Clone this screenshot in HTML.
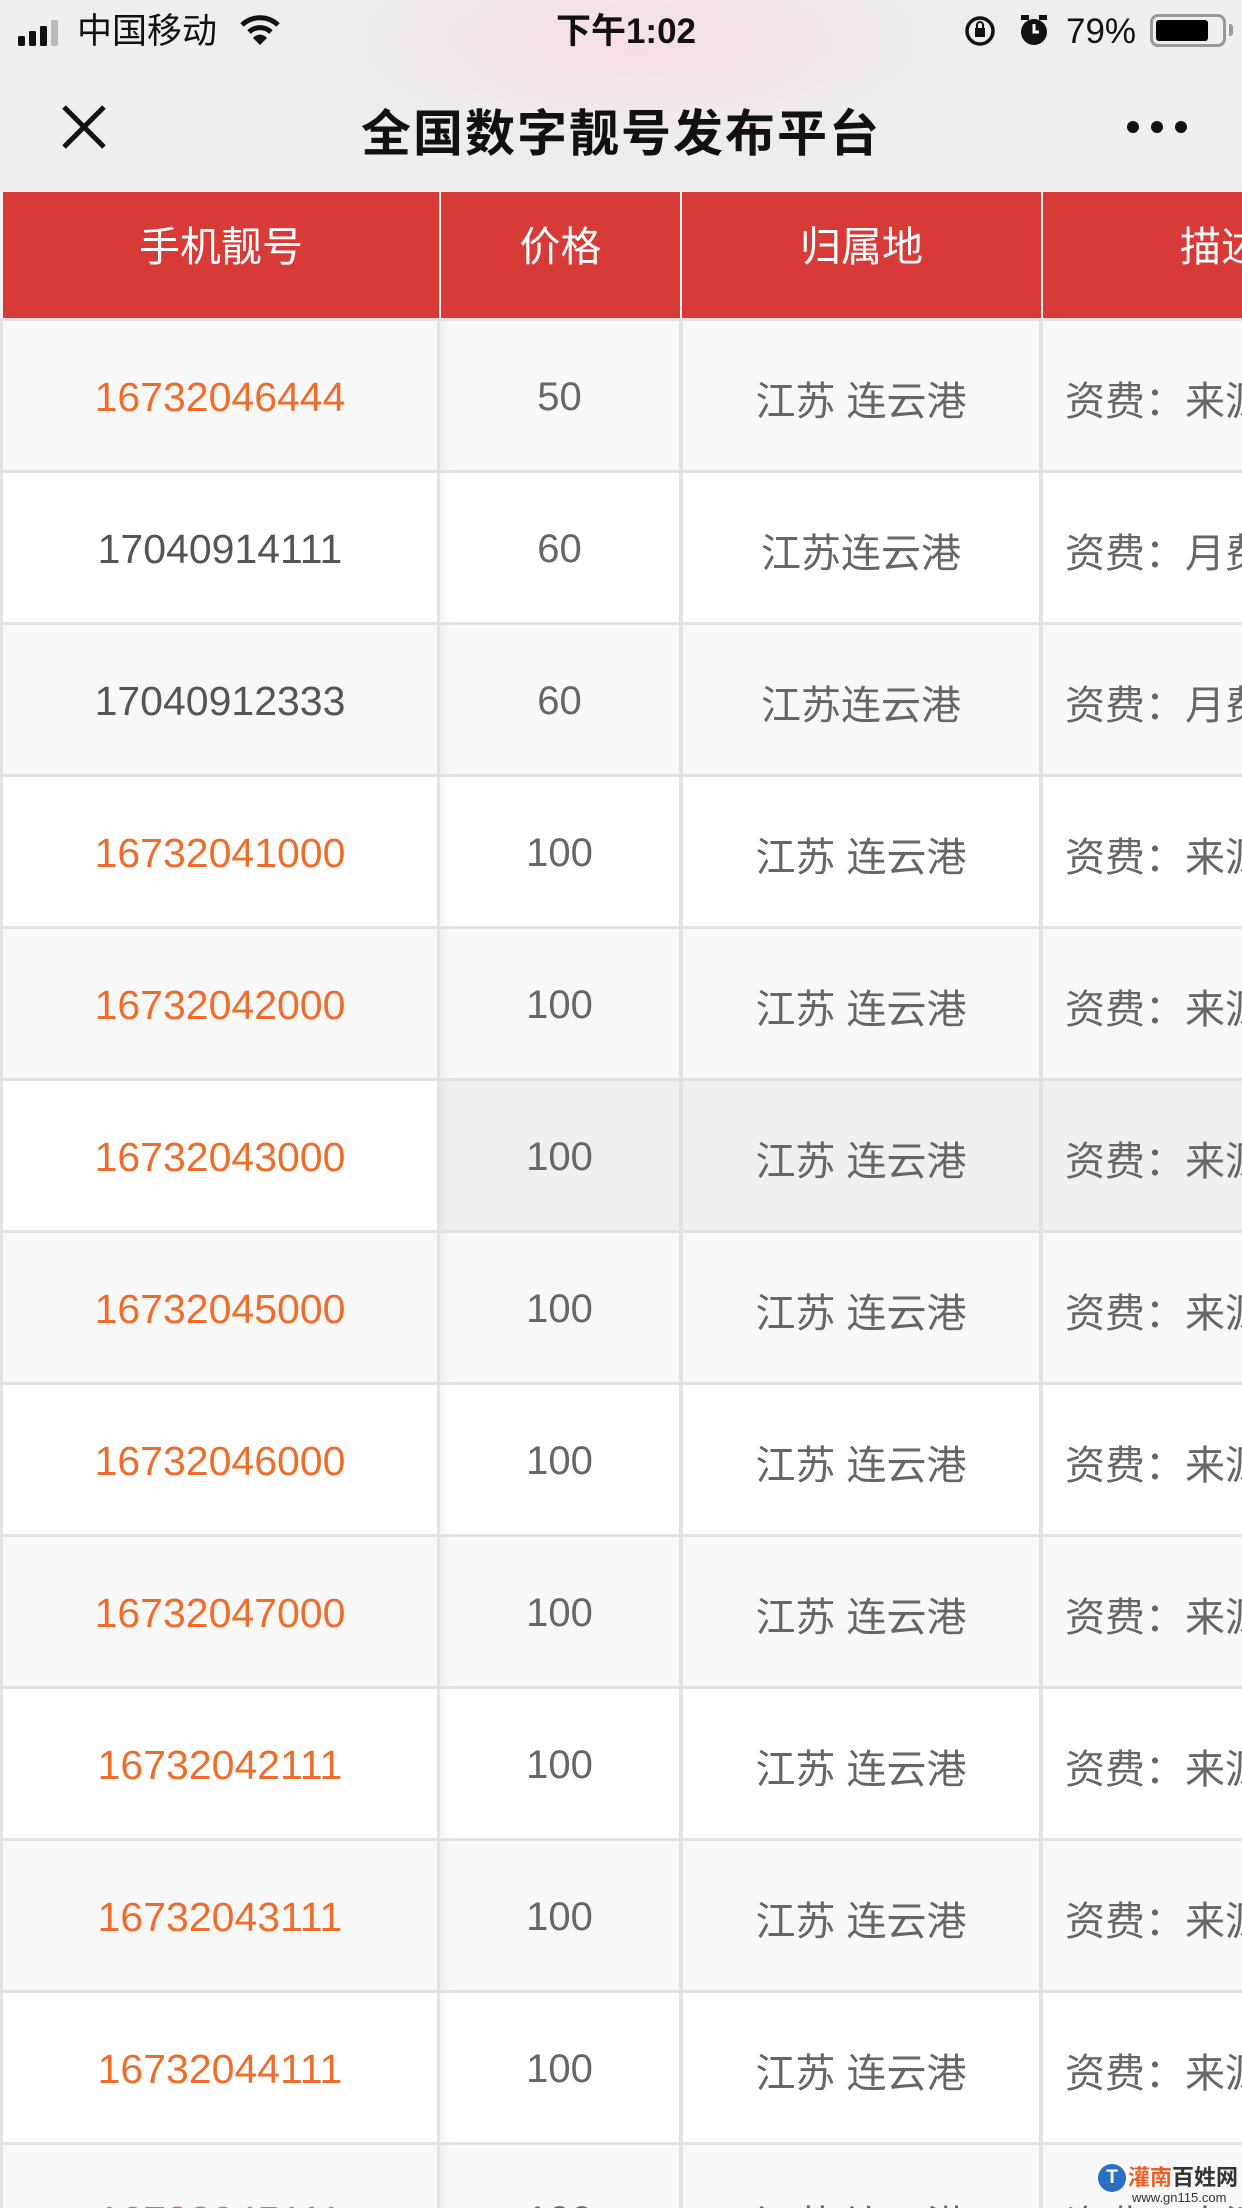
<!DOCTYPE html>
<html><head><meta charset="utf-8">
<style>
*{margin:0;padding:0;box-sizing:border-box}
html,body{width:1242px;height:2208px;overflow:hidden;font-family:"Liberation Sans","Noto Sans CJK SC",sans-serif}
body{background:#e2e2e2;position:relative}
#top{position:absolute;left:0;top:0;width:1242px;height:192px;background:radial-gradient(ellipse 500px 180px at 640px 40px,#f6dfe0 0%,#f1eaea 50%,#efefef 100%)}
.sb{position:absolute;top:8px;font-size:35px;color:#111;line-height:48px}
#title{position:absolute;left:0;right:0;top:94px;text-align:center;font-size:50px;font-weight:bold;color:#111;letter-spacing:2px}
.hdr{position:absolute;top:192px;height:126px;background:#d83a37;color:#fff;font-size:41px;display:flex;align-items:center;justify-content:center;overflow:hidden;white-space:nowrap;padding-bottom:24px}
.row{position:absolute;left:0;width:1242px;height:149px}
.c{position:absolute;top:0;height:149px;display:flex;align-items:center;justify-content:center;font-size:40px;color:#666;overflow:hidden;white-space:nowrap;padding-top:4px}
.c1{left:3px;width:434px;font-size:41px}
.c2{left:440px;width:239px;box-shadow:inset 8px 0 10px -6px rgba(0,0,0,.06)}
.c3{left:683px;width:356px}
.c4{left:1043px;width:199px;justify-content:flex-start;padding-left:22px}
.o{color:#ef6d2a}
.g{color:#555}
.a .c{background:#f8f8f8}
.b .c{background:#fff}
</style></head><body>
<div id="top">
  <svg style="position:absolute;left:18px;top:20px" width="50" height="26"><rect x="0" y="16" width="7" height="10" rx="1.5" fill="#111"/><rect x="11" y="11" width="7" height="15" rx="1.5" fill="#111"/><rect x="22" y="6" width="7" height="20" rx="1.5" fill="#111"/><rect x="33" y="0" width="7" height="26" rx="1.5" fill="#bbb"/></svg>
  <div class="sb" style="left:77px">中国移动</div>
  <svg style="position:absolute;left:240px;top:14px" width="40" height="32" viewBox="0 0 40 32"><path d="M2 11 A26 26 0 0 1 38 11" stroke="#111" stroke-width="5" fill="none"/><path d="M9 18 A16 16 0 0 1 31 18" stroke="#111" stroke-width="5" fill="none"/><path d="M20 31 L13 24 A9 9 0 0 1 27 24 Z" fill="#111"/></svg>
  <div class="sb" style="left:0;right:0;text-align:center;font-weight:bold;padding-left:10px">下午1:02</div>
  <svg style="position:absolute;left:963px;top:14px" width="36" height="34"><circle cx="17" cy="17" r="13" stroke="#111" stroke-width="3.5" fill="none"/><rect x="12" y="14" width="10" height="9" fill="#111"/><path d="M14 14 v-3 a3 3 0 0 1 6 0 v3" stroke="#111" stroke-width="2" fill="none"/></svg>
  <svg style="position:absolute;left:1017px;top:12px" width="34" height="36"><circle cx="17" cy="20" r="13" fill="#111"/><path d="M17 12v8h5" stroke="#fff" stroke-width="3" fill="none"/><rect x="4" y="3" width="8" height="5" fill="#111"/><rect x="22" y="3" width="8" height="5" fill="#111"/></svg>
  <div class="sb" style="left:1066px">79%</div>
  <div style="position:absolute;left:1150px;top:14px;width:76px;height:33px;border:3px solid #999;border-radius:8px"><div style="position:absolute;left:3px;top:3px;width:52px;height:21px;background:#000;border-radius:3px"></div></div>
  <div style="position:absolute;left:1229px;top:24px;width:4px;height:12px;background:#999;border-radius:0 3px 3px 0"></div>
  <svg style="position:absolute;left:60px;top:103px" width="48" height="48"><path d="M4 4L44 44M44 4L4 44" stroke="#111" stroke-width="5"/></svg>
  <div id="title">全国数字靓号发布平台</div>
  <svg style="position:absolute;left:1124px;top:116px" width="66" height="22"><circle cx="9" cy="11" r="6" fill="#111"/><circle cx="33" cy="11" r="6" fill="#111"/><circle cx="57" cy="11" r="6" fill="#111"/></svg>
</div>
<div style="position:absolute;top:192px;left:0;width:1242px;height:126px;background:#f4f4f4"></div>
<div class="hdr" style="left:3px;width:436px">手机靓号</div>
<div class="hdr" style="left:441px;width:239px">价格</div>
<div class="hdr" style="left:682px;width:359px">归属地</div>
<div class="hdr" style="left:1043px;width:199px;justify-content:flex-start;padding-left:137px">描述</div>

<div class="row a" style="top:321px"><div class="c c1 o">16732046444</div><div class="c c2">50</div><div class="c c3">江苏 连云港</div><div class="c c4">资费：来源</div></div>
<div class="row b" style="top:473px"><div class="c c1 g">17040914111</div><div class="c c2">60</div><div class="c c3">江苏连云港</div><div class="c c4">资费：月费</div></div>
<div class="row a" style="top:625px"><div class="c c1 g">17040912333</div><div class="c c2">60</div><div class="c c3">江苏连云港</div><div class="c c4">资费：月费</div></div>
<div class="row b" style="top:777px"><div class="c c1 o">16732041000</div><div class="c c2">100</div><div class="c c3">江苏 连云港</div><div class="c c4">资费：来源</div></div>
<div class="row a" style="top:929px"><div class="c c1 o">16732042000</div><div class="c c2">100</div><div class="c c3">江苏 连云港</div><div class="c c4">资费：来源</div></div>
<div class="row b" style="top:1081px"><div class="c c1 o">16732043000</div><div class="c c2" style="background:#f0f0f0">100</div><div class="c c3" style="background:#f0f0f0">江苏 连云港</div><div class="c c4" style="background:#f0f0f0">资费：来源</div></div>
<div class="row a" style="top:1233px"><div class="c c1 o">16732045000</div><div class="c c2">100</div><div class="c c3">江苏 连云港</div><div class="c c4">资费：来源</div></div>
<div class="row b" style="top:1385px"><div class="c c1 o">16732046000</div><div class="c c2">100</div><div class="c c3">江苏 连云港</div><div class="c c4">资费：来源</div></div>
<div class="row a" style="top:1537px"><div class="c c1 o">16732047000</div><div class="c c2">100</div><div class="c c3">江苏 连云港</div><div class="c c4">资费：来源</div></div>
<div class="row b" style="top:1689px"><div class="c c1 o">16732042111</div><div class="c c2">100</div><div class="c c3">江苏 连云港</div><div class="c c4">资费：来源</div></div>
<div class="row a" style="top:1841px"><div class="c c1 o">16732043111</div><div class="c c2">100</div><div class="c c3">江苏 连云港</div><div class="c c4">资费：来源</div></div>
<div class="row b" style="top:1993px"><div class="c c1 o">16732044111</div><div class="c c2">100</div><div class="c c3">江苏 连云港</div><div class="c c4">资费：来源</div></div>
<div class="row a" style="top:2145px"><div class="c c1 o">16732045111</div><div class="c c2">100</div><div class="c c3">江苏 连云港</div><div class="c c4">资费：来源</div></div>

<div style="position:absolute;left:1098px;top:2160px;width:144px;height:48px">
  <div style="position:absolute;left:0;top:4px;width:28px;height:28px;border-radius:50%;background:#2a6fc0;color:#fff;font-size:19px;font-weight:bold;text-align:center;line-height:28px">T</div>
  <div style="position:absolute;left:30px;top:0;font-size:22px;font-weight:bold;color:#e8612a;white-space:nowrap">灌南<span style="color:#333">百姓网</span></div>
  <div style="position:absolute;left:34px;top:30px;font-size:13px;color:#333;white-space:nowrap">www.gn115.com</div>
</div>
</body></html>
